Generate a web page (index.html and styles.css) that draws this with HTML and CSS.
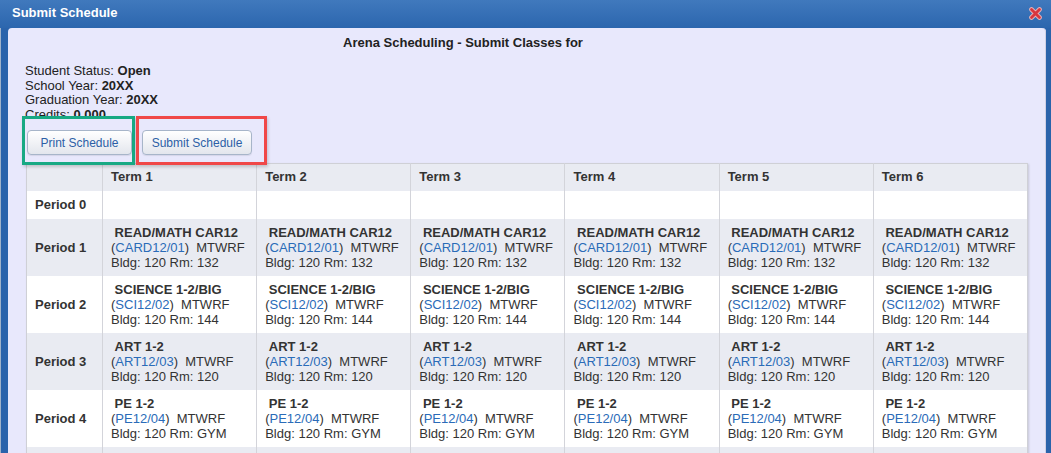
FILE: index.html
```html
<!DOCTYPE html>
<html>
<head>
<meta charset="utf-8">
<title>Submit Schedule</title>
<link rel="stylesheet" href="styles.css">
</head>
<body>
<div class="dialog">
  <div class="titlebar">
    <span class="title">Submit Schedule</span>
    <svg class="close" width="13" height="13" viewBox="0 0 13 13"><path d="M2.5 2.5 L10.5 10.5 M10.5 2.5 L2.5 10.5" stroke="#e9b3b8" stroke-width="4.6" stroke-linecap="round"/><path d="M2.5 2.5 L10.5 10.5 M10.5 2.5 L2.5 10.5" stroke="#d8363f" stroke-width="2.8" stroke-linecap="round"/></svg>
  </div>
  <div class="frame">
    <div class="content">
      <div class="heading">Arena Scheduling - Submit Classes for</div>
      <div class="info">
        <div>Student Status: <b>Open</b></div>
        <div>School Year: <b>20XX</b></div>
        <div>Graduation Year: <b>20XX</b></div>
        <div>Credits: <b>0.000</b></div>
      </div>
      <div class="actions">
        <span class="hl hl-green"><button class="btn btn-print">Print Schedule</button></span>
        <span class="hl hl-red"><button class="btn btn-submit">Submit Schedule</button></span>
      </div>
      <table class="sched">
        <colgroup><col class="c-period"><col><col><col><col><col><col></colgroup>
        <thead>
          <tr><th></th><th>Term 1</th><th>Term 2</th><th>Term 3</th><th>Term 4</th><th>Term 5</th><th>Term 6</th></tr>
        </thead>
        <tbody>
          <tr class="odd"><td class="per">Period 0</td><td></td><td></td><td></td><td></td><td></td><td></td></tr>
          <tr class="even">
            <td class="per">Period 1</td>
            <td><div class="crs"><b>&nbsp;READ/MATH CAR12</b><br>(<a href="#">CARD12/01</a>)&nbsp; MTWRF<br>Bldg: 120 Rm: 132</div></td>
            <td><div class="crs"><b>&nbsp;READ/MATH CAR12</b><br>(<a href="#">CARD12/01</a>)&nbsp; MTWRF<br>Bldg: 120 Rm: 132</div></td>
            <td><div class="crs"><b>&nbsp;READ/MATH CAR12</b><br>(<a href="#">CARD12/01</a>)&nbsp; MTWRF<br>Bldg: 120 Rm: 132</div></td>
            <td><div class="crs"><b>&nbsp;READ/MATH CAR12</b><br>(<a href="#">CARD12/01</a>)&nbsp; MTWRF<br>Bldg: 120 Rm: 132</div></td>
            <td><div class="crs"><b>&nbsp;READ/MATH CAR12</b><br>(<a href="#">CARD12/01</a>)&nbsp; MTWRF<br>Bldg: 120 Rm: 132</div></td>
            <td><div class="crs"><b>&nbsp;READ/MATH CAR12</b><br>(<a href="#">CARD12/01</a>)&nbsp; MTWRF<br>Bldg: 120 Rm: 132</div></td>
          </tr>
          <tr class="odd">
            <td class="per">Period 2</td>
            <td><div class="crs"><b>&nbsp;SCIENCE 1-2/BIG</b><br>(<a href="#">SCI12/02</a>)&nbsp; MTWRF<br>Bldg: 120 Rm: 144</div></td>
            <td><div class="crs"><b>&nbsp;SCIENCE 1-2/BIG</b><br>(<a href="#">SCI12/02</a>)&nbsp; MTWRF<br>Bldg: 120 Rm: 144</div></td>
            <td><div class="crs"><b>&nbsp;SCIENCE 1-2/BIG</b><br>(<a href="#">SCI12/02</a>)&nbsp; MTWRF<br>Bldg: 120 Rm: 144</div></td>
            <td><div class="crs"><b>&nbsp;SCIENCE 1-2/BIG</b><br>(<a href="#">SCI12/02</a>)&nbsp; MTWRF<br>Bldg: 120 Rm: 144</div></td>
            <td><div class="crs"><b>&nbsp;SCIENCE 1-2/BIG</b><br>(<a href="#">SCI12/02</a>)&nbsp; MTWRF<br>Bldg: 120 Rm: 144</div></td>
            <td><div class="crs"><b>&nbsp;SCIENCE 1-2/BIG</b><br>(<a href="#">SCI12/02</a>)&nbsp; MTWRF<br>Bldg: 120 Rm: 144</div></td>
          </tr>
          <tr class="even">
            <td class="per">Period 3</td>
            <td><div class="crs"><b>&nbsp;ART 1-2</b><br>(<a href="#">ART12/03</a>)&nbsp; MTWRF<br>Bldg: 120 Rm: 120</div></td>
            <td><div class="crs"><b>&nbsp;ART 1-2</b><br>(<a href="#">ART12/03</a>)&nbsp; MTWRF<br>Bldg: 120 Rm: 120</div></td>
            <td><div class="crs"><b>&nbsp;ART 1-2</b><br>(<a href="#">ART12/03</a>)&nbsp; MTWRF<br>Bldg: 120 Rm: 120</div></td>
            <td><div class="crs"><b>&nbsp;ART 1-2</b><br>(<a href="#">ART12/03</a>)&nbsp; MTWRF<br>Bldg: 120 Rm: 120</div></td>
            <td><div class="crs"><b>&nbsp;ART 1-2</b><br>(<a href="#">ART12/03</a>)&nbsp; MTWRF<br>Bldg: 120 Rm: 120</div></td>
            <td><div class="crs"><b>&nbsp;ART 1-2</b><br>(<a href="#">ART12/03</a>)&nbsp; MTWRF<br>Bldg: 120 Rm: 120</div></td>
          </tr>
          <tr class="odd">
            <td class="per">Period 4</td>
            <td><div class="crs"><b>&nbsp;PE 1-2</b><br>(<a href="#">PE12/04</a>)&nbsp; MTWRF<br>Bldg: 120 Rm: GYM</div></td>
            <td><div class="crs"><b>&nbsp;PE 1-2</b><br>(<a href="#">PE12/04</a>)&nbsp; MTWRF<br>Bldg: 120 Rm: GYM</div></td>
            <td><div class="crs"><b>&nbsp;PE 1-2</b><br>(<a href="#">PE12/04</a>)&nbsp; MTWRF<br>Bldg: 120 Rm: GYM</div></td>
            <td><div class="crs"><b>&nbsp;PE 1-2</b><br>(<a href="#">PE12/04</a>)&nbsp; MTWRF<br>Bldg: 120 Rm: GYM</div></td>
            <td><div class="crs"><b>&nbsp;PE 1-2</b><br>(<a href="#">PE12/04</a>)&nbsp; MTWRF<br>Bldg: 120 Rm: GYM</div></td>
            <td><div class="crs"><b>&nbsp;PE 1-2</b><br>(<a href="#">PE12/04</a>)&nbsp; MTWRF<br>Bldg: 120 Rm: GYM</div></td>
          </tr>
          <tr class="even filler">
            <td></td><td></td><td></td><td></td><td></td><td></td><td></td>
          </tr>
        </tbody>
      </table>
    </div>
  </div>
</div>
</body>
</html>
```

FILE: styles.css
```css
html, body {
  margin: 0;
  padding: 0;
  height: 100%;
  overflow: hidden;
}
body {
  font-family: "Liberation Sans", Arial, sans-serif;
  font-size: 13px;
  color: #222;
}
.dialog {
  background: #2a63ab;
  min-height: 100%;
  box-shadow: inset 1px 0 0 #9fb2c9;
}
.titlebar {
  height: 28px;
  box-sizing: border-box;
  display: flex;
  align-items: center;
  justify-content: space-between;
  padding: 0 9px 3px 12px;
  background: linear-gradient(#4079bd, #2c66ae);
}
.title {
  color: #fff;
  font-weight: bold;
  font-size: 13px;
  line-height: 16px;
}
.close {
  display: block;
  margin-top: 1px;
}
.frame {
  padding: 0 5px 0 8px;
}
.content {
  background: #e8e8fc;
  border-radius: 4px 4px 0 0;
  padding: 7px 18px 0 17px;
  min-height: 600px;
  box-shadow: inset -1px 0 0 #d0d0e4;
}
.heading {
  font-weight: bold;
  line-height: 16px;
  text-align: center;
  padding-right: 127px;
  color: #222;
}
.info {
  margin-top: 13px;
  line-height: 14.5px;
  color: #222;
}
.actions {
  position: relative;
  z-index: 2;
  display: flex;
  margin-top: -6px;
  margin-left: -3px;
}
.hl {
  display: block;
  background: #e8e8fc;
  border: 3px solid;
  height: 32px;
  padding-top: 11px;
  box-sizing: content-box;
  box-shadow: 1px 2px 3px rgba(0, 0, 0, 0.18);
}
.hl-green {
  border-color: #17a983;
  padding-left: 2px;
  padding-right: 0;
}
.hl-red {
  border-color: #f04848;
  padding-left: 3px;
  padding-right: 12px;
  margin-left: 1px;
}
.btn {
  display: block;
  height: 25px;
  box-sizing: border-box;
  border: 1px solid #a7b5c9;
  border-radius: 4px;
  background: linear-gradient(#ffffff, #e3e6ed);
  color: #2c5fa6;
  font-family: "Liberation Sans", Arial, sans-serif;
  font-size: 12px;
  padding: 0;
  box-shadow: 0 1px 1px rgba(0, 0, 0, 0.08);
}
.btn-print { width: 105px; }
.btn-submit { width: 110px; }
.sched {
  position: relative;
  z-index: 1;
  margin-top: -2px;
  margin-left: 1px;
  width: 1002px;
  table-layout: fixed;
  border-collapse: collapse;
  border: 1px solid #cfd0d6;
  box-shadow: 1px 1px 2px rgba(0, 0, 0, 0.15);
  background: #fff;
  color: #333;
}
.c-period { width: 76px; }
.sched th {
  background: #e9ebf2;
  text-align: left;
  font-weight: bold;
  line-height: 16px;
  padding: 5px 8px 6px;
  border-left: 1px solid #d3d4da;
}
.sched td {
  padding: 6px 8px;
  border-left: 1px solid #d3d4da;
  vertical-align: top;
  line-height: 16px;
}
.sched th:first-child, .sched td:first-child {
  border-left: none;
}
.sched td.per {
  font-weight: bold;
  vertical-align: middle;
}
.sched tr.even td { background: #e9ebf2; }
.sched tr.odd td { background: #fff; }
.sched tr.filler td { height: 45px; }
.crs {
  line-height: 15px;
  white-space: nowrap;
}
.crs a {
  color: #2a6bb8;
  text-decoration: none;
}
```
